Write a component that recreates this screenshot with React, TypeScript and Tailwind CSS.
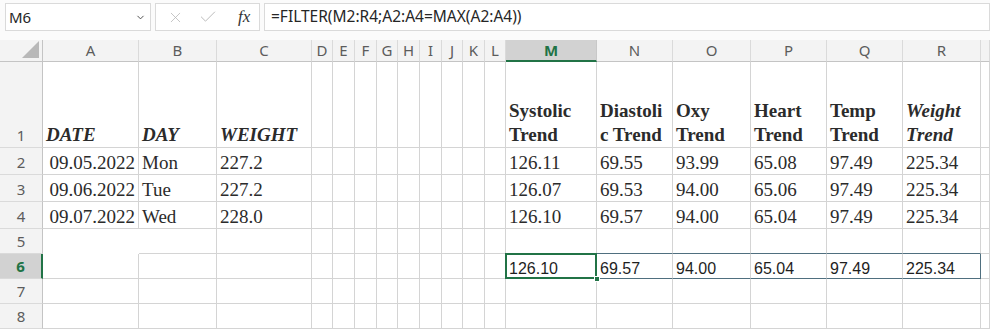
import React from 'react';
import { X, Check, ChevronDown } from 'lucide-react';

const COLS = ['A', 'B', 'C', 'D', 'E', 'F', 'G', 'H', 'I', 'J', 'K', 'L', 'M', 'N', 'O', 'P', 'Q', 'R', 'S'];
const ROWS = [1, 2, 3, 4, 5, 6, 7, 8];

const serif = "font-['Liberation_Serif','Times_New_Roman',serif] text-[19px] text-[#2b2b2b]";
const ui = "font-['Noto_Sans','Open_Sans',sans-serif]";

// row 1 headers (two-line wrapped ones for M..R)
const heads: Record<string, { lines: string[]; italic?: boolean }> = {
  A1: { lines: ['DATE'], italic: true },
  B1: { lines: ['DAY'], italic: true },
  C1: { lines: ['WEIGHT'], italic: true },
  M1: { lines: ['Systolic', 'Trend'] },
  N1: { lines: ['Diastoli', 'c Trend'] },
  O1: { lines: ['Oxy', 'Trend'] },
  P1: { lines: ['Heart', 'Trend'] },
  Q1: { lines: ['Temp', 'Trend'] },
  R1: { lines: ['Weight', 'Trend'], italic: true },
};

const data: Record<string, string> = {
  A2: '09.05.2022', B2: 'Mon', C2: '227.2',
  A3: '09.06.2022', B3: 'Tue', C3: '227.2',
  A4: '09.07.2022', B4: 'Wed', C4: '228.0',
  M2: '126.11', N2: '69.55', O2: '93.99', P2: '65.08', Q2: '97.49', R2: '225.34',
  M3: '126.07', N3: '69.53', O3: '94.00', P3: '65.06', Q3: '97.49', R3: '225.34',
  M4: '126.10', N4: '69.57', O4: '94.00', P4: '65.04', Q4: '97.49', R4: '225.34',
};

const result: Record<string, string> = {
  M6: '126.10', N6: '69.57', O6: '94.00', P6: '65.04', Q6: '97.49', R6: '225.34',
};

const boxed = ['N', 'O', 'P', 'Q', 'R'];

function borderFor(col: string, row: number) {
  if (col === 'A' && row === 5) return '';
  if (col === 'R' && row === 6) return 'border-r border-b border-[#4f6f7f]';
  if ((row === 5 || row === 6) && boxed.includes(col)) {
    return 'border-r border-b border-r-[#d4d4d4] border-b-[#4f6f7f]';
  }
  return 'border-r border-b border-[#d4d4d4]';
}

function Cell({ col, row }: { col: string; row: number }) {
  const key = col + row;
  const head = heads[key];
  const val = data[key];
  const res = result[key];

  return (
    <div className={`relative flex items-end overflow-visible whitespace-nowrap ${borderFor(col, row)} ${col === 'A' && row > 1 ? 'justify-end pr-[3px]' : 'pl-[3px]'}`}>
      {head && (
        <div className={`${serif} font-bold leading-[24px] ${head.italic ? 'italic' : ''}`}>
          {head.lines.map((l) => (
            <div key={l}>{l}</div>
          ))}
        </div>
      )}
      {val && <span className={`${serif} leading-[22px]`}>{val}</span>}
      {res && (
        <span className="font-['Liberation_Sans',Arial,sans-serif] text-[16px] leading-[19px] text-[#1f1f1f]">{res}</span>
      )}
      {key === 'M6' && (
        <>
          <div className="absolute -left-[1px] -top-[1px] -right-[1px] -bottom-[1px] border-2 border-[#217346] z-10" />
          <div className="absolute -right-[4px] -bottom-[4px] w-[6px] h-[6px] bg-[#217346] border border-white z-20" />
        </>
      )}
    </div>
  );
}

export default function App() {
  return (
    <div className="w-[990px] h-[330px] overflow-hidden bg-white">
      {/* formula bar */}
      <div className={`h-[40px] flex items-start pt-[3px] pl-[5px] gap-[4px] bg-[#fbfbfb] ${ui}`}>
        <div className="w-[146px] h-[28px] flex items-center justify-between pl-[3px] pr-[4px] bg-white border border-[#dadada]">
          <span className="text-[15px] text-[#262626]">M6</span>
          <ChevronDown size={11} strokeWidth={2} className="text-[#444]" />
        </div>
        <div className="w-[105px] h-[28px] flex items-center bg-white border border-[#dadada] pl-[11px]">
          <X size={17} strokeWidth={1.1} className="text-[#b5b5b5]" />
          <Check size={20} strokeWidth={1.1} className="text-[#b5b5b5] ml-[14px]" />
          <span className="ml-[20px] font-['Liberation_Serif',serif] italic text-[17px] text-[#333]">fx</span>
        </div>
        <div className="flex-1 h-[28px] flex items-center bg-white border border-[#dadada] pl-[6px]">
          <span className="text-[15.5px] text-[#262626]">=FILTER(M2:R4;A2:A4=MAX(A2:A4))</span>
        </div>
      </div>

      {/* sheet */}
      <div className="grid grid-cols-[43px_96px_78px_95px_21px_22px_22px_21px_22px_22px_21px_22px_21px_91px_76px_78px_76px_76px_78px_1fr] grid-rows-[22px_86px_27px_27px_27px_25px_25px_25px_25px]">
        {/* corner */}
        <div className="relative bg-[#f3f3f3] border-r border-b border-[#c4c4c4]">
          <div className="absolute right-[3px] bottom-[3px] w-0 h-0 border-l-[17px] border-l-transparent border-b-[17px] border-b-[#b8b8b8]" />
        </div>
        {COLS.map((c) =>
          c === 'M' ? (
            <div key={c} className={`flex items-center justify-center bg-[#d2d2d2] border-r border-[#c8c8c8] border-b-2 border-b-[#217346] text-[15px] font-bold text-[#217346] ${ui}`}>
              {c}
            </div>
          ) : (
            <div key={c} className={`flex items-center justify-center bg-[#f3f3f3] border-r border-[#dadada] border-b border-b-[#c4c4c4] text-[15px] text-[#5c5c5c] ${ui}`}>
              {c === 'S' ? '' : c}
            </div>
          )
        )}

        {ROWS.map((r) => (
          <React.Fragment key={r}>
            {r === 6 ? (
              <div className={`flex items-end justify-center pb-[1px] bg-[#d2d2d2] border-b border-[#dadada] border-r-2 border-r-[#217346] text-[15px] font-bold text-[#217346] ${ui}`}>
                {r}
              </div>
            ) : (
              <div className={`flex items-end justify-center pb-[1px] bg-[#f3f3f3] border-b border-[#dadada] border-r border-r-[#c4c4c4] text-[15px] text-[#5c5c5c] ${ui}`}>
                {r}
              </div>
            )}
            {COLS.map((c) => (
              <Cell key={c} col={c} row={r} />
            ))}
          </React.Fragment>
        ))}
      </div>
    </div>
  );
}
